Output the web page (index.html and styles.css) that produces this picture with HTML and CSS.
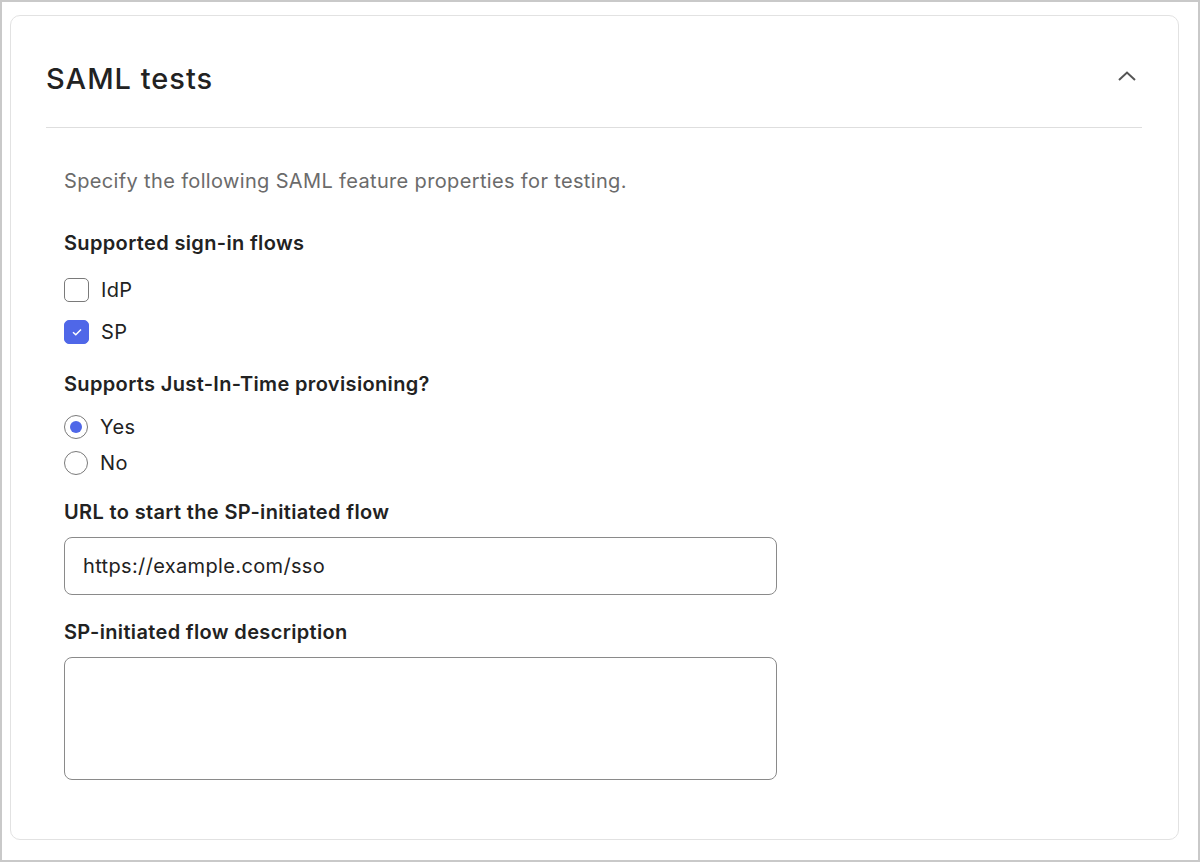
FILE: index.html
```html
<!DOCTYPE html>
<html lang="en">
<head>
  <meta charset="UTF-8">
  <title>SAML tests</title>
  <meta name="viewport" content="width=device-width, initial-scale=1">
  <link rel="stylesheet" href="styles.css">
</head>
<body>
  <div class="frame">
    <div class="card">
      <div class="card-header">
        <h2>SAML tests</h2>
        <button class="toggle" aria-label="Collapse">
          <svg width="18" height="10" viewBox="0 0 18 10"><path d="M1 9 L9 1.5 L17 9" fill="none" stroke="#555" stroke-width="2"/></svg>
        </button>
      </div>

      <div class="card-body">
        <p class="intro">Specify the following SAML feature properties for testing.</p>

        <div class="field-label first">Supported sign-in flows</div>
        <label class="check-row">
          <span class="checkbox"></span>
          <span>IdP</span>
        </label>
        <label class="check-row second">
          <span class="checkbox checked">
            <svg width="12" height="10" viewBox="0 0 12 10"><path d="M2 5.2 L4.8 7.8 L10 2.5" fill="none" stroke="#fff" stroke-width="1.5"/></svg>
          </span>
          <span>SP</span>
        </label>

        <div class="field-label after-checks">Supports Just-In-Time provisioning?</div>
        <label class="radio-row">
          <span class="radio selected"></span>
          <span>Yes</span>
        </label>
        <label class="radio-row second">
          <span class="radio"></span>
          <span>No</span>
        </label>

        <div class="field-label">URL to start the SP-initiated flow</div>
        <div class="text-input">https://example.com/sso</div>

        <div class="field-label">SP-initiated flow description</div>
        <div class="text-area"></div>
      </div>
    </div>
  </div>
</body>
</html>
```

FILE: styles.css
```css
:root {
  --text: #222;
  --muted: #6b6b6b;
  --blue: #4f67e8;
  --line: #dedede;
  --control: #7a7a7a;
}
* {
  box-sizing: border-box;
}
body {
  font-family: Inter, 'Noto Sans', sans-serif;
  color: var(--text);
  background: #fff;
  margin: 0;
  padding: 0;
  font-size: 20px;
  letter-spacing: 0.35px;
}
.frame {
  width: 1200px;
  height: 862px;
  border: 2px solid #c9c9c9;
  padding: 13px 19px 0 8px;
}
.card {
  border: 1px solid #e2e2e2;
  border-radius: 10px;
  height: 825px;
  padding: 0 36px 0 35px;
}
.card-header {
  display: flex;
  align-items: center;
  justify-content: space-between;
  padding: 46px 0 31px;
  border-bottom: 1px solid var(--line);
}
.card-header h2 {
  margin: 0;
  font-size: 29px;
  line-height: 34px;
  font-weight: 500;
  letter-spacing: 1px;
}
.toggle {
  background: none;
  border: none;
  padding: 0;
  margin: -6px 6px 0 0;
  width: 18px;
  height: 10px;
  display: flex;
}
.card-body {
  padding: 0 18px;
}
.intro {
  margin: 40px 0 0;
  line-height: 26px;
  color: var(--muted);
}
.field-label {
  margin-top: 25px;
  line-height: 24px;
  font-weight: 600;
}
.field-label.first {
  margin-top: 37px;
}
.field-label.after-checks {
  margin-top: 28px;
}
.check-row, .radio-row {
  display: flex;
  align-items: center;
  gap: 12px;
  line-height: 24px;
  margin-top: 23px;
}
.check-row.second {
  margin-top: 18px;
}
.radio-row {
  margin-top: 19px;
}
.radio-row.second {
  margin-top: 12px;
}
.checkbox {
  width: 25px;
  height: 24px;
  border: 1.5px solid var(--control);
  border-radius: 5px;
  display: flex;
  align-items: center;
  justify-content: center;
}
.checkbox.checked {
  background: var(--blue);
  border-color: var(--blue);
}
.radio {
  width: 24px;
  height: 24px;
  border: 1.5px solid var(--control);
  border-radius: 50%;
  display: flex;
  align-items: center;
  justify-content: center;
}
.radio.selected::after {
  content: "";
  width: 12px;
  height: 12px;
  border-radius: 50%;
  background: var(--blue);
}
.text-input, .text-area {
  width: 713px;
  margin-top: 13px;
  border: 1.5px solid #8a8a8a;
  border-radius: 8px;
}
.text-input {
  height: 58px;
  padding: 0 18px;
  display: flex;
  align-items: center;
}
.text-area {
  height: 123px;
}
```
